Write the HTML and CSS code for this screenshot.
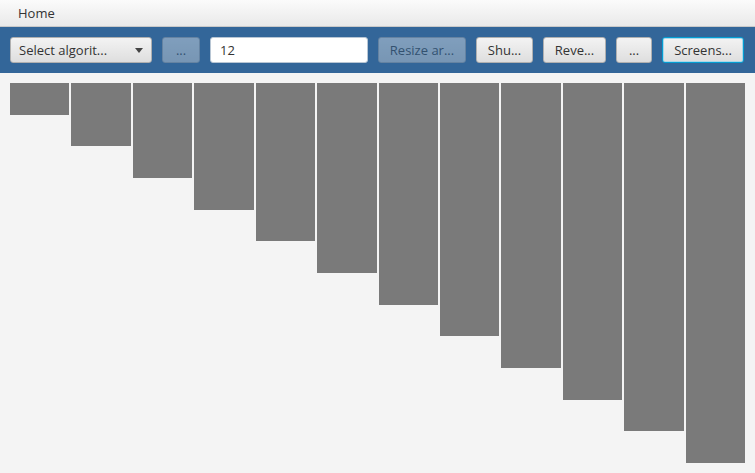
FILE: index.html
```html
<!DOCTYPE html>
<html>
<head>
<meta charset="utf-8">
<link rel="stylesheet" href="styles.css">
</head>
<body>
<div class="menubar"><span class="menu">Home</span></div>
<div class="toolbar">
  <div class="combo w-combo"><span>Select algorit...</span><span class="arrow"></span></div>
  <button class="btn disabled w-dots1">...</button>
  <div class="field w-field">12</div>
  <button class="btn disabled w-resize">Resize ar...</button>
  <button class="btn w-shu">Shu...</button>
  <button class="btn w-rev">Reve...</button>
  <button class="btn w-dots2">...</button>
  <button class="btn focused w-screen">Screens...</button>
</div>
<div class="chart">
  <div class="bar" style="height:31.67px"></div>
  <div class="bar" style="height:63.33px"></div>
  <div class="bar" style="height:95px"></div>
  <div class="bar" style="height:126.67px"></div>
  <div class="bar" style="height:158.33px"></div>
  <div class="bar" style="height:190px"></div>
  <div class="bar" style="height:221.67px"></div>
  <div class="bar" style="height:253.33px"></div>
  <div class="bar" style="height:285px"></div>
  <div class="bar" style="height:316.67px"></div>
  <div class="bar" style="height:348.33px"></div>
  <div class="bar" style="height:380px"></div>
</div>
</body>
</html>
```
FILE: styles.css
```css
html, body {
  margin: 0;
  padding: 0;
  background: #f4f4f4;
  font-family: "Open Sans", "Noto Sans", sans-serif;
  font-size: 13px;
  color: #333;
  overflow: hidden;
}
.menubar {
  height: 26px;
  background: linear-gradient(#fbfbfb, #e9e9e9);
  border-bottom: 1px solid #c9c9c9;
  display: flex;
  align-items: center;
  padding-left: 18px;
  box-sizing: content-box;
}
.menu { color: #333; }
.toolbar {
  background: #336699;
  height: 46px;
  display: flex;
  align-items: center;
  padding: 0 10px;
  gap: 10px;
  box-sizing: border-box;
}
.combo, .btn, .field {
  height: 26px;
  box-sizing: border-box;
  border-radius: 3px;
  font-family: inherit;
  font-size: 13px;
  color: #333;
  flex: none;
}
.combo {
  display: flex;
  align-items: center;
  justify-content: space-between;
  padding: 0 8px 0 8px;
  background: linear-gradient(#f3f3f3, #dedede);
  border: 1px solid #b0b0b0;
}
.arrow {
  width: 0;
  height: 0;
  border-left: 4.5px solid transparent;
  border-right: 4.5px solid transparent;
  border-top: 5px solid #444;
}
.btn {
  background: linear-gradient(#f3f3f3, #dedede);
  border: 1px solid #b0b0b0;
  padding: 0;
  text-align: center;
  line-height: 22px;
}
.btn.disabled { opacity: 0.4; }
.btn.focused {
  border: 1px solid #039ed3;
  box-shadow: inset 0 0 0 1px #a9d8ea;
}
.field {
  background: #fff;
  border: 1px solid #b8c6d4;
  padding: 0 9px;
  display: flex;
  align-items: center;
}
.w-combo { width: 142px; }
.w-dots1 { width: 38px; }
.w-field { width: 158px; }
.w-resize { width: 88px; }
.w-shu { width: 57px; }
.w-rev { width: 63px; }
.w-dots2 { width: 36px; }
.w-screen { width: 82px; }
.chart {
  display: flex;
  align-items: flex-start;
  gap: 2px;
  padding: 10px 10px 0 10px;
  width: 735px;
}
.bar {
  flex: 1;
  background: #7a7a7a;
}
```
